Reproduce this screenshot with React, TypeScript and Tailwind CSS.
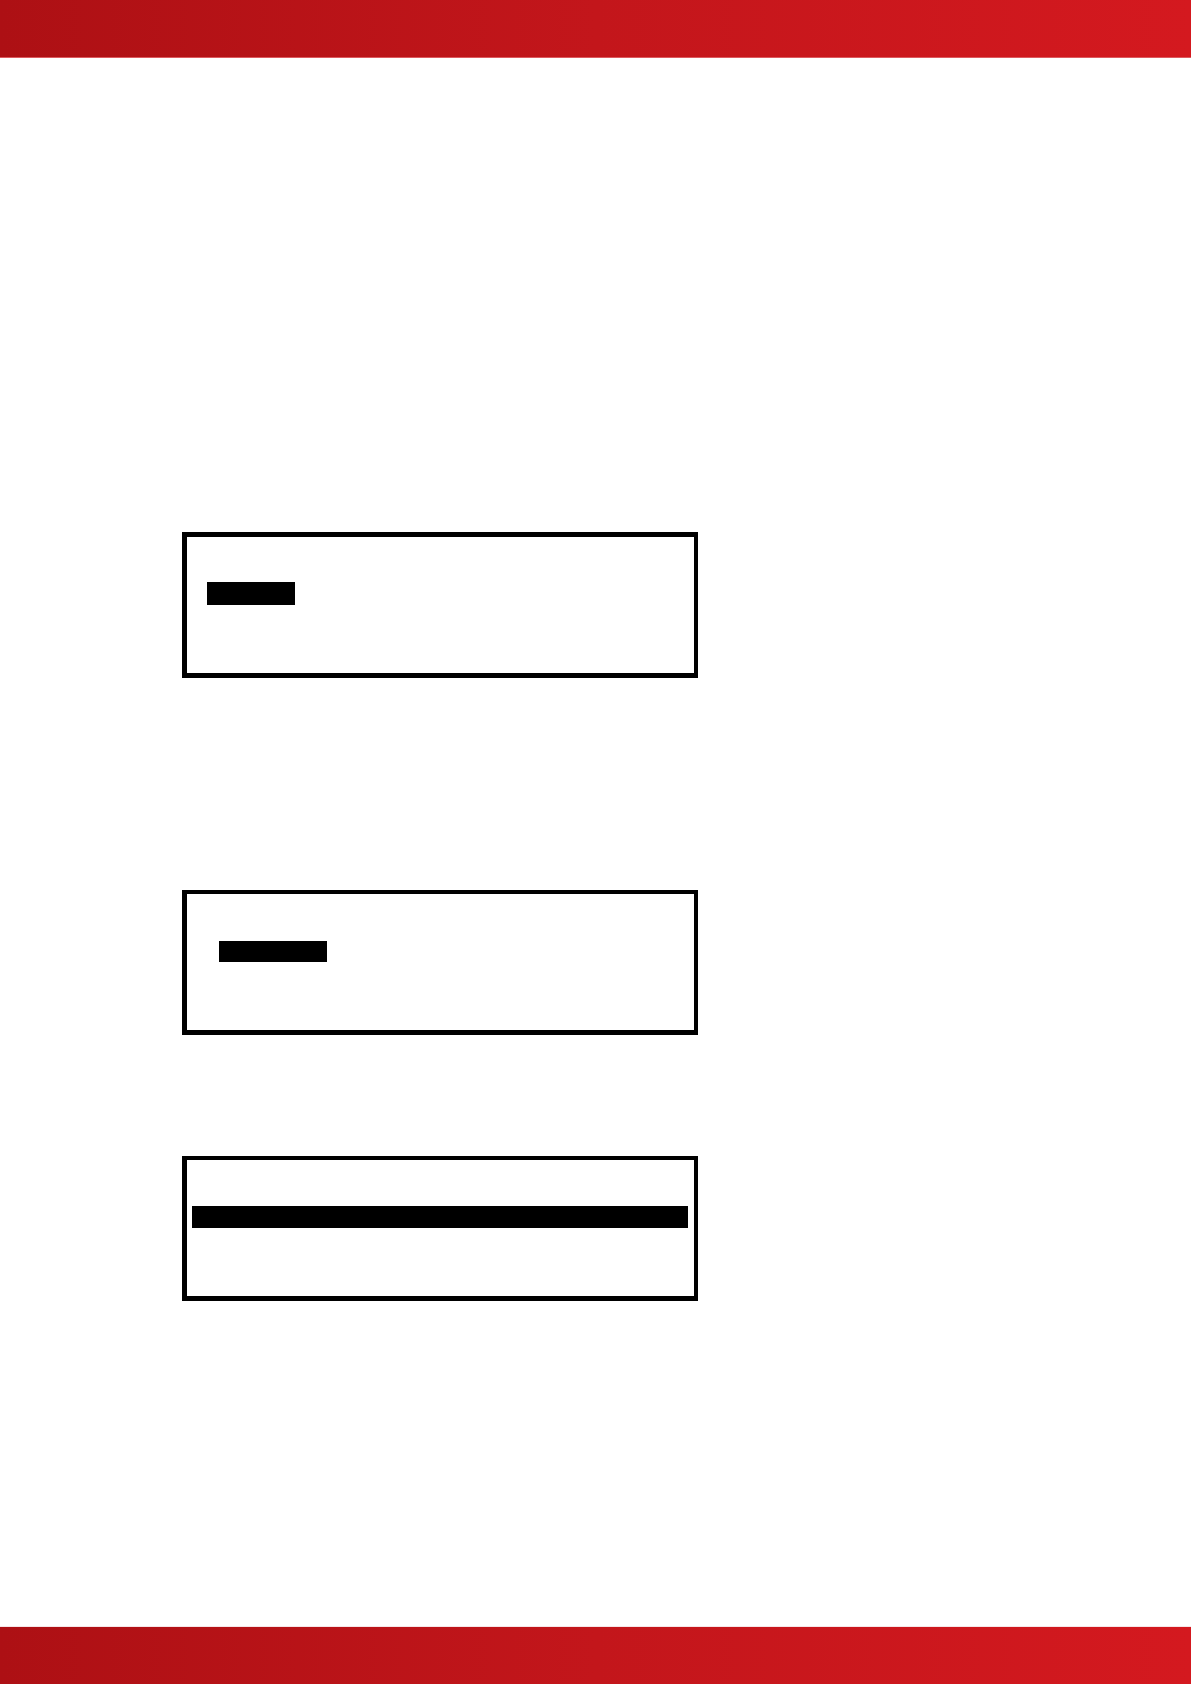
import React from 'react';
import clsx from 'clsx';

type Panel = {
  id: string;
  frame: string;
  bar: string;
};

const panels: Panel[] = [
  { id: 'first', frame: 'border-t-5 pt-[45px] pl-5', bar: 'h-[23px] w-[88px]' },
  { id: 'second', frame: 'mt-[212px] border-t-4 pt-[47px] pl-8', bar: 'h-[21px] w-[108px]' },
  { id: 'third', frame: 'mt-[121px] border-t-4 pt-[46px] pl-[5px] pr-[6px]', bar: 'h-[22px] w-full' },
];

const DisplayPanel: React.FC<{ panel: Panel }> = ({ panel }) => (
  <section
    className={clsx('w-full max-w-[516px] border-r-4 border-b-5 border-l-5 border-black pb-[68px]', panel.frame)}
  >
    <div className={clsx('bg-black', panel.bar)}></div>
  </section>
);

export default function App() {
  return (
    <div className="flex min-h-screen flex-col bg-white">
      <header className="h-[58px] border-b border-[#dc5a5f] bg-linear-to-r/srgb from-[#ad1014] via-[#c3161b] to-[#d4191f]"></header>

      <main className="flex-1 px-[182px] pt-[474px] pb-[325px]">
        {panels.map((panel) => (
          <DisplayPanel key={panel.id} panel={panel} />
        ))}
      </main>

      <footer className="h-[58px] border-t border-[#f6e6e8] bg-linear-to-r/srgb from-[#ad1014] via-[#c3161b] to-[#d4191f]"></footer>
    </div>
  );
}
